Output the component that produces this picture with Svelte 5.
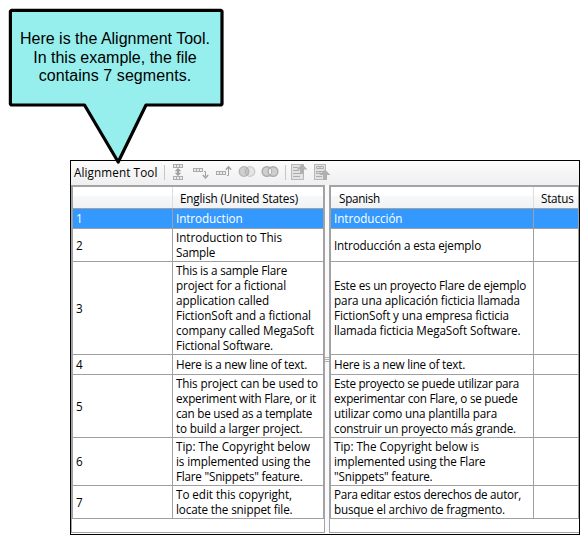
<script>
  // Each line of text is [text, width in px].
  const here = [['Here is a new line of text.', 131]];
  const rows = [
    { h: 20, en: [['Introduction', 66.5]], es: [['Introducción', 68.5]], selected: true },
    { h: 33, en: [['Introduction to This', 106], ['Sample', 39]], es: [['Introducción a esta ejemplo', 147]] },
    {
      h: 93,
      en: [['This is a sample Flare', 111], ['project for a fictional', 110], ['application called', 93], ['FictionSoft and a fictional', 135], ['company called MegaSoft', 138], ['Fictional Software.', 97]],
      es: [['Este es un proyecto Flare de ejemplo', 192], ['para una aplicación ficticia llamada', 186], ['FictionSoft y una empresa ficticia', 175], ['llamada ficticia MegaSoft Software.', 186.5]]
    },
    { h: 20, en: here, es: here },
    {
      h: 63,
      en: [['This project can be used to', 142], ['experiment with Flare, or it', 140], ['can be used as a template', 136], ['to build a larger project.', 126.5]],
      es: [['Este proyecto se puede utilizar para', 185], ['experimentar con Flare, o se puede', 183.5], ['utilizar como una plantilla para', 163], ['construir un proyecto más grande.', 182]]
    },
    {
      h: 48,
      en: [['Tip: The Copyright below', 134], ['is implemented using the', 134.5], ['Flare "Snippets" feature.', 126.5]],
      es: [['Tip: The Copyright below is', 145], ['implemented using the Flare', 151.5], ['"Snippets" feature.', 98.5]]
    },
    {
      h: 33,
      en: [['To edit this copyright,', 116], ['locate the snippet file.', 116.5]],
      es: [['Para editar estos derechos de autor,', 187], ['busque el archivo de fragmento.', 171]]
    }
  ];

  // Tracks a line so that it takes up the given width.
  function fit(node, width) {
    const natural = node.getBoundingClientRect().width;
    node.style.letterSpacing = (width - natural) / node.textContent.length + 'px';
  }
</script>

{#snippet lines(list)}
  {#each list as [text, w]}
    <div class="line"><span use:fit={w}>{text}</span></div>
  {/each}
{/snippet}

{#snippet cells(x, y)}
  <rect x={x + 0.5} y={y + 0.5} width="9" height="3" fill="#ececec" stroke="#ababab" />
  <path d="M{x + 3.5} {y}v4M{x + 6.5} {y}v4" stroke="#ababab" />
{/snippet}

<div class="stage">
  <div class="window">
    <div class="toolbar">
      <span class="title"><span use:fit={83.5}>Alignment Tool</span></span>
      <svg width="180" height="24" viewBox="157 161 180 24" fill="none">
        <path d="M164.5 165v15M285.5 165v15" stroke="#c5c5c5" />
        {@render cells(173, 164)}
        {@render cells(173, 176)}
        <path d="M178 168l3.300 3.200h-2.300v1.600h2.300l-3.300 3.200l-3.300-3.200h2.300v-1.600h-2.300z" fill="#9f9f9f" />
        {@render cells(193, 168)}
        <path d="M204 171.500h1.500v5" stroke="#a0a0a0" />
        <path d="M202.800 175l2.700 3l2.700-3" stroke="#a0a0a0" stroke-width="1.400" />
        {@render cells(216, 171)}
        <path d="M227 175.500h1.500v-8" stroke="#a0a0a0" />
        <path d="M225.800 169.800l2.700-3l2.700 3" stroke="#a0a0a0" stroke-width="1.400" />
        <circle cx="250" cy="171.500" r="4.800" fill="#e4e4e4" stroke="#cbcbcb" stroke-width="1.300" />
        <circle cx="244" cy="171.500" r="4.800" fill="#cfcfcf" stroke="#b5b5b5" stroke-width="1.300" />
        <path d="M247 167.800a4.800 4.800 0 0 1 0 7.400a4.800 4.800 0 0 1 0-7.400z" fill="#c2c2c2" stroke="#b0b0b0" />
        <circle cx="267" cy="171.500" r="4.800" fill="#cfcfcf" stroke="#acacac" stroke-width="1.500" />
        <circle cx="273" cy="171.500" r="4.800" fill="#cfcfcf" stroke="#acacac" stroke-width="1.500" />
        <path d="M270 167.800a4.800 4.800 0 0 1 0 7.400a4.800 4.800 0 0 1 0-7.400z" fill="#f0f0f0" stroke="#a8a8a8" />
        <rect x="291.500" y="164.500" width="12" height="15" fill="#e2e2e2" stroke="#b8b8b8" />
        <path d="M293 167.500h5M293 170.500h6M293 173.500h9M293 176.500h7" stroke="#adadad" />
        <path d="M302 164l5.500 5.500h-3.500v4.500h-4v-4.500h-3.500z" fill="#b0b0b0" />
        <rect x="314.500" y="164.500" width="11" height="15" fill="#e2e2e2" stroke="#b8b8b8" />
        <path d="M316.500 166.500h7v2h-7zM316.500 171.500h7v2h-7zM316 176.500h6M320 166v3M320 171v3" stroke="#adadad" />
        <path d="M325 169.500l5.500 5.500h-3.500v5h-4v-5h-3.500z" fill="#b0b0b0" />
      </svg>
    </div>
    <div class="panes">
      <div class="pane left">
        <div class="row head">
          <div class="cell num"></div>
          <div class="cell en"><span use:fit={118}>English (United States)</span></div>
        </div>
        {#each rows as r, i}
          <div class="row" class:selected={r.selected} style:height="{r.h}px">
            <div class="cell num"><div class="line">{i + 1}</div></div>
            <div class="cell en">{@render lines(r.en)}</div>
          </div>
        {/each}
      </div>
      <div class="splitter"><i></i><i></i><i></i></div>
      <div class="pane right">
        <div class="row head">
          <div class="cell es"><span use:fit={41}>Spanish</span></div>
          <div class="cell status"><span use:fit={32.5}>Status</span></div>
        </div>
        {#each rows as r}
          <div class="row" class:selected={r.selected} style:height="{r.h}px">
            <div class="cell es">{@render lines(r.es)}</div>
            <div class="cell status"></div>
          </div>
        {/each}
      </div>
    </div>
  </div>

  <div class="callout">
    <svg width="232" height="170" viewBox="0 0 232 170">
      <path d="M11.400 10.300H221L222 11.300V104L221 105H146L118.200 162L84.500 105H11.400L10.400 104V11.300Z" fill="#96efed" stroke="#000" stroke-width="3.200" stroke-linejoin="round" />
    </svg>
    <div class="message">
      <div><span use:fit={190}>Here is the Alignment Tool.</span></div>
      <div><span use:fit={163.5}>In this example, the file</span></div>
      <div><span use:fit={152.5}>contains 7 segments.</span></div>
    </div>
  </div>
</div>

<style>
  :global(body) { background: #fff; }
  .stage {
    position: relative;
    width: 580px;
    height: 535px;
    padding: 160px 0 0 70px;
    box-sizing: border-box;
    overflow: hidden;
    font: 11.7px/15px 'Open Sans', 'Noto Sans', sans-serif;
    color: #000;
  }
  span { white-space: pre; display: inline-block; }
  .window {
    box-sizing: border-box;
    width: 510px;
    height: 375px;
    border: 1px solid #000;
    display: flex;
    flex-direction: column;
    overflow: hidden;
    background: #fff;
  }
  .toolbar {
    height: 24px;
    flex: none;
    display: flex;
    background: linear-gradient(#fcfcfc, #efefef);
  }
  .title { width: 83px; padding: 4px 0 0 3px; flex: none; }
  .toolbar svg { flex: none; }
  .panes { display: flex; height: 348px; flex: none; }
  .pane {
    box-sizing: border-box;
    border: 1px solid #a3a3a9;
    flex: none;
  }
  .left { width: 254px; }
  .right { width: 250px; border-right: 0; }
  .splitter {
    width: 4px;
    flex: none;
    display: flex;
    flex-direction: column;
    justify-content: center;
    gap: 1px;
    background: #fafafa;
  }
  .splitter i { height: 1px; background: #b0b0b0; }
  .row {
    display: flex;
    box-sizing: border-box;
    border-left: 1px solid #a0a0a0;
    border-bottom: 1px solid #a0a0a0;
  }
  .cell {
    box-sizing: border-box;
    border-right: 1px solid #a0a0a0;
    display: flex;
    flex-direction: column;
    justify-content: center;
    padding-left: 3px;
    flex: none;
  }
  .line { height: 15px; }
  .num { width: 100px; }
  .en { width: 151px; }
  .es { width: 203px; }
  .status { width: 45px; }
  .head {
    height: 23px;
    border-top: 1px solid #a3a3a9;
    background: linear-gradient(#fff 0, #fff 40%, #f7f8f9 42%, #f1f2f4 100%);
  }
  .head .cell { border-right-color: #dcdde0; align-items: flex-start; padding-top: 2px; }
  .head .en { padding-left: 7px; border-right-color: #a0a0a0; }
  .head .es { padding-left: 8px; }
  .head .status { padding-left: 7px; border-right-color: #a0a0a0; }
  .selected { background: #39f; color: #fff; }
  .callout { position: absolute; left: 0; top: 0; width: 232px; height: 170px; }
  .callout svg { display: block; }
  .message {
    position: absolute;
    left: 8px;
    top: 30px;
    width: 214px;
    text-align: center;
    font: 16px/18.5px 'Liberation Sans', Arial, sans-serif;
  }
</style>
